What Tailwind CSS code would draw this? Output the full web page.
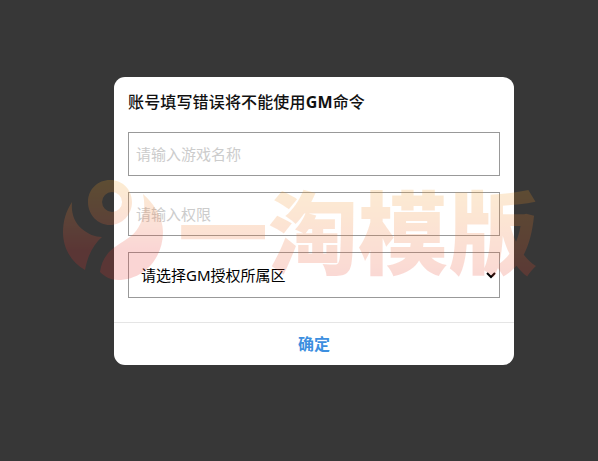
<!DOCTYPE html>
<html lang="zh-CN">
<head>
    <meta charset="UTF-8">
    <title>GM</title>
    <script src="https://cdn.jsdelivr.net/npm/@tailwindcss/browser@4"></script>
</head>
<body class="relative h-[461px] w-[598px] overflow-hidden bg-[#373737] font-['Noto_Sans','Noto_Sans_CJK_SC',sans-serif]">

    <!-- dialog -->
    <div class="ml-[114px] mt-[77px] inline-block w-[400px] rounded-[11px] bg-white">
        <div class="px-[14px] pb-6">
            <h2 class="flex h-[55px] items-center pb-[5px] text-[16px] font-medium leading-none tracking-[0.15px] text-[#111]">账号填写错误将不能使用<span class="font-bold">GM</span>命令</h2>
            <input type="text" placeholder="请输入游戏名称" class="block h-[44px] w-[372px] border border-[#999] px-[7px] text-[15px] placeholder:text-[#ccc]">
            <input type="text" placeholder="请输入权限" class="mt-4 block h-[44px] w-[372px] border border-[#999] px-[7px] text-[15px] placeholder:text-[#ccc]">
            <select class="mt-4 block h-[46px] w-[372px] border border-[#999] bg-white px-2 text-[15px] text-black">
                <option>请选择GM授权所属区</option>
            </select>
        </div>
        <div class="flex h-[43px] items-center justify-center border-t border-[#e5e5e5] text-[16px] font-bold text-[#3d8fe0]">确定</div>
    </div>

    <!-- watermark -->
    <div class="pointer-events-none absolute left-[63px] top-[180px] flex h-[105px] w-[474px] items-center opacity-20">
        <svg class="h-[105px] w-[101px] shrink-0" viewBox="0 0 101 105">
            <defs>
                <linearGradient id="wm" gradientUnits="userSpaceOnUse" x1="0" y1="0" x2="0" y2="100">
                    <stop offset="0" stop-color="#f5a623"/>
                    <stop offset="0.45" stop-color="#ee6a3c"/>
                    <stop offset="0.7" stop-color="#e8352f"/>
                    <stop offset="1" stop-color="#e8352f"/>
                </linearGradient>
            </defs>
            <path fill="url(#wm)" fill-rule="evenodd" d="M25 22C25 9 35 0 47 0C60 0 69 10 69 22C69 35 59 45 47 45C35 45 25 35 25 22ZM49 12A10 10 0 1 0 49.1 32A10 10 0 1 0 49 12Z"/>
            <path fill="url(#wm)" d="M9 22C8 33 11 42 19 49C25 54 32 57 39 57C31 64 25 74 22 90C8 82 0 68 0 52C0 41 3 31 9 22Z"/>
            <path fill="url(#wm)" d="M80 14C90 23 100 36 100 52C100 79 80 100 55 100C48 100 42 97 37 92C38 84 41 78 46 72C52 66 60 62 68 56C78 48 84 32 80 14Z"/>
        </svg>
        <span class="ml-[14px] whitespace-nowrap bg-gradient-to-b from-[#f5a623] to-[#e8352f] bg-clip-text text-[90px] leading-[105px] font-black text-transparent">一淘模版</span>
    </div>

</body>
</html>
